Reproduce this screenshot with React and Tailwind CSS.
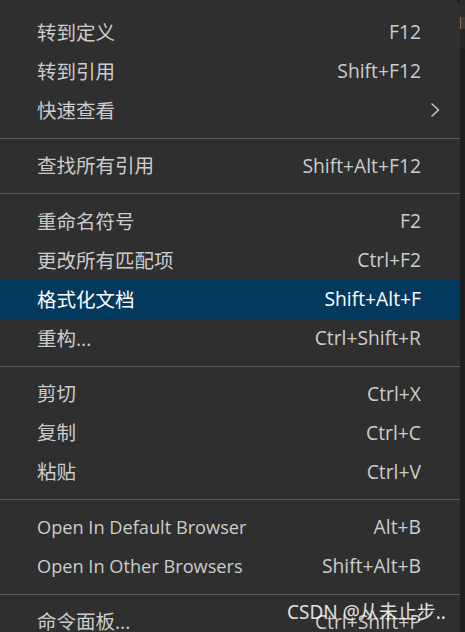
const GROUPS = [
  [
    { label: '转到定义', key: 'F12' },
    { label: '转到引用', key: 'Shift+F12' },
    { label: '快速查看', sub: true },
  ],
  [{ label: '查找所有引用', key: 'Shift+Alt+F12' }],
  [
    { label: '重命名符号', key: 'F2' },
    { label: '更改所有匹配项', key: 'Ctrl+F2' },
    { label: '格式化文档', key: 'Shift+Alt+F', active: true },
    { label: '重构...', key: 'Ctrl+Shift+R' },
  ],
  [
    { label: '剪切', key: 'Ctrl+X' },
    { label: '复制', key: 'Ctrl+C' },
    { label: '粘贴', key: 'Ctrl+V' },
  ],
  [
    { label: 'Open In Default Browser', key: 'Alt+B', latin: true },
    { label: 'Open In Other Browsers', key: 'Shift+Alt+B', latin: true },
  ],
  [{ label: '命令面板...', key: 'Ctrl+Shift+P' }],
]

function Row({ item }) {
  return (
    <div
      className={`h-[39px] flex items-center pl-[37px] pr-[39px] relative ${
        item.active ? 'bg-[#04395e] text-white' : 'text-[#cccccc]'
      }`}
    >
      <span className={`flex-1 whitespace-nowrap ${item.latin ? 'text-[18.2px]' : 'text-[19.5px]'}`}>
        {item.label}
      </span>
      {item.key && <span className="whitespace-nowrap text-[19.3px]">{item.key}</span>}
      {item.sub && (
        <svg
          width="10"
          height="16"
          viewBox="0 0 10 16"
          className="absolute left-[430px] top-[11px]"
          fill="none"
          stroke="#cccccc"
          strokeWidth="1.4"
        >
          <path d="M1.5 1.5 L8.5 8 L1.5 14.5" />
        </svg>
      )}
    </div>
  )
}

export default function App() {
  return (
    <div className="w-[465px] h-[632px] overflow-hidden flex bg-[#1e1e1e] relative">
      {/* menu */}
      <div
        className="w-[460px] shrink-0 bg-[#2f2f2f] rounded-tr-[7px] pt-[13px]"
        style={{ fontFamily: '"Open Sans", "Noto Sans CJK SC", sans-serif' }}
      >
        {GROUPS.map((group, gi) => (
          <div key={gi}>
            {gi > 0 && (
              <div className="h-[16.5px] flex items-center">
                <div className="h-px w-full bg-[#5a5a5a]" />
              </div>
            )}
            {group.map(item => (
              <Row key={item.label} item={item} />
            ))}
          </div>
        ))}
      </div>

      {/* editor edge */}
      <div className="flex-1 flex flex-col">
        <div className="h-[17px] bg-[#2b2b2b]" />
        <div className="h-[12px] bg-[#3a3a3a] border-l border-[#8a6a50]" />
        <div className="h-[20px] bg-[#252526]" />
        <div className="flex-1 bg-[#1e1e1e]" />
      </div>

      {/* watermark */}
      <div
        className="absolute left-[287px] top-[598px] text-[19px] text-white/85 whitespace-nowrap"
        style={{ fontFamily: '"Noto Sans", "Noto Sans CJK SC", sans-serif' }}
      >
        CSDN @从未止步..
      </div>
    </div>
  )
}
